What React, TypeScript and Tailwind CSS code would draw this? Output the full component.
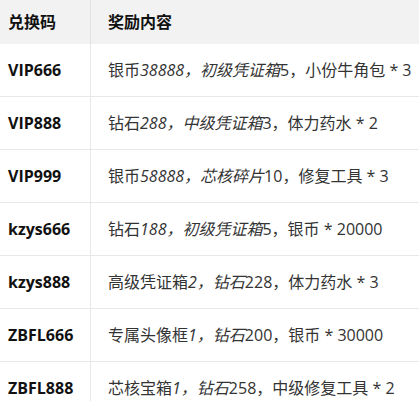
const rows: { code: string; parts: [string, string, string] }[] = [
  { code: "VIP666", parts: ["银币", "38888，初级凭证箱", "5，小份牛角包 * 3"] },
  { code: "VIP888", parts: ["钻石", "288，中级凭证箱", "3，体力药水 * 2"] },
  { code: "VIP999", parts: ["银币", "58888，芯核碎片", "10，修复工具 * 3"] },
  { code: "kzys666", parts: ["钻石", "188，初级凭证箱", "5，银币 * 20000"] },
  { code: "kzys888", parts: ["高级凭证箱", "2，钻石", "228，体力药水 * 3"] },
  { code: "ZBFL666", parts: ["专属头像框", "1，钻石", "200，银币 * 30000"] },
  { code: "ZBFL888", parts: ["芯核宝箱", "1，钻石", "258，中级修复工具 * 2"] },
]

export default function App() {
  return (
    <div className="w-[419px] h-[401px] overflow-hidden bg-white text-[16px] font-['Open_Sans','Noto_Sans_CJK_SC',sans-serif]">
      <div className="flex h-[44px] bg-[#f2f2f2] font-bold text-[#111]">
        <div className="w-[91px] shrink-0 flex items-center pl-2 border-r border-[#e2e2e2]">兑换码</div>
        <div className="flex items-center pl-[17px]">奖励内容</div>
      </div>
      {rows.map((r) => (
        <div key={r.code} className="flex h-[53px] border-b border-[#e8e8e8]">
          <div className="w-[91px] shrink-0 flex items-center pl-2 border-r border-[#e8e8e8] font-bold text-[#111]">
            {r.code}
          </div>
          <div className="flex items-center pl-[17px] text-[#333] whitespace-nowrap">
            <span>{r.parts[0]}</span>
            <em>{r.parts[1]}</em>
            <span>{r.parts[2]}</span>
          </div>
        </div>
      ))}
    </div>
  )
}
